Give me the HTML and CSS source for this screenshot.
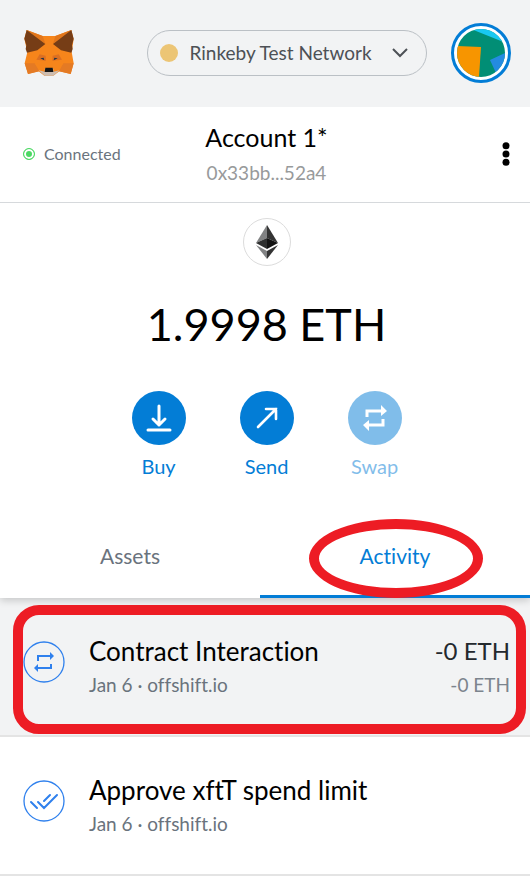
FILE: index.html
```html
<!DOCTYPE html>
<html lang="en">
<head>
<meta charset="utf-8">
<meta name="viewport" content="width=device-width, initial-scale=1">
<title>Wallet</title>
<link rel="stylesheet" href="styles.css">
</head>
<body>
<header class="topbar">
  <a class="logo" href="#" aria-label="Home">
    <svg width="50" height="46" viewBox="72 60 150 138" aria-hidden="true">
      <path fill="#f6851b" d="M80 60 128 78H166L214 60 221 88 215 126 221 160 212 192 178 184 160 197H133L116 184 84 192 74 160 82 127 73 86Z"/>
      <path fill="#e2761b" d="M80 60 136 101 128 78ZM214 60 159 101 166 78Z"/>
      <path fill="#763d16" d="M80 60 136 102 112 121 81 128 77 117 79 106 73 86ZM214 60 159 102 183 121 214 128 218 117 216 106 221 86Z"/>
      <path fill="#e47a24" d="M74 160H104L118 184 84 192ZM221 160H190L177 184 212 192Z"/>
      <path fill="#f6851b" d="M104 160 120 182 117 163ZM190 160 175 182 178 163Z"/>
      <path fill="#dc7022" d="M109 149 119 133 137 137 138 152ZM186 149 176 133 158 137 157 152Z"/>
      <path fill="#233447" d="M121 145 131 143 133 151ZM173 145 163 143 161 151Z"/>
      <path fill="#cdbdb1" d="M116 181 134 185 135 174H159L161 185 178 181 160 197H134Z"/>
      <path fill="#161616" d="M136 173H158L160 186H134Z"/>
    </svg>
  </a>
  <button class="network" type="button">
    <span class="network-dot"></span>
    <span class="network-name">Rinkeby Test Network</span>
    <svg width="16" height="10" viewBox="0 0 16 10" aria-hidden="true"><path d="M1 1 8 8 15 1" fill="none" stroke="#4d5156" stroke-width="2"/></svg>
  </button>
  <button class="avatar" type="button" aria-label="My accounts">
    <svg width="48" height="48" viewBox="0 0 48 48" aria-hidden="true">
      <clipPath id="disc"><circle cx="24" cy="24" r="24"/></clipPath>
      <g clip-path="url(#disc)">
        <path fill="#018e75" d="M0 0H48V48H0Z"/>
        <path fill="#18c8f2" d="M14 0H48V14L44 12Z"/>
        <path fill="#f79500" d="M0 17 24 18 22 48H0Z"/>
        <path fill="#248be1" d="M48 24 33 31 39 44 48 46Z"/>
      </g>
    </svg>
  </button>
</header>

<main>
  <section class="account">
    <button class="status" type="button"><span class="status-ring"></span>Connected</button>
    <button class="account-id" type="button">
      <span class="account-name">Account 1*</span>
      <span class="account-address">0x33bb...52a4</span>
    </button>
    <button class="more" type="button" aria-label="Account options">
      <svg width="8" height="24" viewBox="0 0 8 24" aria-hidden="true"><circle cx="4" cy="3.7" r="3.5"/><circle cx="4" cy="12" r="3.5"/><circle cx="4" cy="20.3" r="3.5"/></svg>
    </button>
  </section>

  <section class="overview">
    <span class="token">
      <svg width="22" height="34" viewBox="0 0 22 34" aria-hidden="true">
        <path fill="#828384" d="M11 0 0 18 11 13Z"/><path fill="#343434" d="M11 0 22 18 11 13Z"/>
        <path fill="#2f3030" d="M0 18 11 13V24Z"/><path fill="#131313" d="M22 18 11 13V24Z"/>
        <path fill="#828384" d="M0 20 11 26V34Z"/><path fill="#343434" d="M22 20 11 26V34Z"/>
      </svg>
    </span>
    <h1 class="balance">1.9998 ETH</h1>
    <div class="actions">
      <button class="action" type="button">
        <span class="action-icon"><svg width="26" height="28" viewBox="0 0 26 28" aria-hidden="true"><path d="M13 2V21M7 15 13 21 19 15M2 26H24" fill="none" stroke="#fff" stroke-width="3" stroke-linecap="round" stroke-linejoin="round"/></svg></span>
        Buy
      </button>
      <button class="action" type="button">
        <span class="action-icon"><svg width="22" height="22" viewBox="0 0 22 22" aria-hidden="true"><path d="M2 20 20 2M10 2H20V12" fill="none" stroke="#fff" stroke-width="2.6" stroke-linecap="round"/></svg></span>
        Send
      </button>
      <button class="action" type="button" disabled>
        <span class="action-icon"><svg width="26" height="26" viewBox="0 0 26 26" aria-hidden="true"><path d="M5 12V6H19M21 14V20H7" fill="none" stroke="#fff" stroke-width="3"/><path d="M19 0 25 6 19 11ZM7 15 1 20 7 26Z" fill="#fff"/></svg></span>
        Swap
      </button>
    </div>
  </section>

  <nav class="tabs">
    <button class="tab" type="button">Assets</button>
    <button class="tab tab-active" type="button">Activity<span class="mark-oval"></span></button>
  </nav>

  <ul class="activity">
    <li class="item item-selected">
      <svg class="item-icon" width="42" height="42" viewBox="0 0 42 42" aria-hidden="true"><circle cx="21" cy="21" r="20" fill="none" stroke="#2f80ed" stroke-width="1.3"/><path d="M15 20V15H28M28 23V27H14" fill="none" stroke="#2f80ed" stroke-width="2"/><path d="M27 11 31 15 27 19ZM15 23 11 27 15 31Z" fill="#2f80ed"/></svg>
      <div class="item-text">
        <h2 class="item-title">Contract Interaction</h2>
        <p class="item-note">Jan 6 · offshift.io</p>
      </div>
      <div class="item-text item-amount">
        <p class="amount">-0 ETH</p>
        <p class="item-note">-0 ETH</p>
      </div>
      <span class="mark-box"></span>
    </li>
    <li class="item">
      <svg class="item-icon" width="42" height="42" viewBox="0 0 42 42" aria-hidden="true"><circle cx="21" cy="21" r="20" fill="none" stroke="#2f80ed" stroke-width="1.3"/><path d="M8 22 14 28M15 22 21 28 34 15M21 21 27 15" fill="none" stroke="#2f80ed" stroke-width="2" stroke-linecap="round"/></svg>
      <div class="item-text">
        <h2 class="item-title">Approve xftT spend limit</h2>
        <p class="item-note">Jan 6 · offshift.io</p>
      </div>
    </li>
  </ul>
</main>
</body>
</html>
```
FILE: styles.css
```css
* { box-sizing: border-box; }

body {
  margin: 0;
  background: #fff;
  color: #000;
  font-family: Lato, "Liberation Sans", sans-serif;
  font-variant-ligatures: none;
}

button {
  padding: 0;
  border: 0;
  background: none;
  color: inherit;
  font: inherit;
  font-variant-ligatures: none;
}

svg { display: block; }
h1, h2, p, ul { margin: 0; padding: 0; font-weight: 400; }

.topbar {
  display: flex;
  align-items: center;
  justify-content: space-between;
  height: 107px;
  padding: 0 19px 2px 24px;
  background: #f2f3f4;
}

.network {
  display: flex;
  align-items: center;
  gap: 12px;
  width: 280px;
  height: 46px;
  margin-left: 48px;
  padding: 0 18px 0 12px;
  border: 1px solid #bbc0c5;
  border-radius: 23px;
  color: #4d5156;
  font-size: 19px;
}

.network-dot {
  width: 18px;
  height: 18px;
  border-radius: 50%;
  background: #ecc575;
}

.network-name { flex: 1; text-align: left; white-space: nowrap; }

.avatar {
  padding: 3px;
  border: 3px solid #037dd6;
  border-radius: 50%;
  background: #fff;
}

.account {
  display: grid;
  grid-template-columns: 1fr auto 1fr;
  align-items: center;
  height: 96px;
  padding: 0 20px 2px 23px;
  border-bottom: 1px solid #d6d9dc;
}

.status {
  display: flex;
  align-items: center;
  gap: 9px;
  color: #6a737d;
  font-size: 16px;
}

.status-ring {
  width: 12px;
  height: 12px;
  border: 1px solid #4cd964;
  border-radius: 50%;
  background: #4cd964;
  box-shadow: inset 0 0 0 2px #fff;
}

.account-id { display: grid; gap: 10px; }
.account-name { font-size: 25px; line-height: 28px; }
.account-address { color: #989a9b; font-size: 19px; line-height: 24px; }
.more { justify-self: end; }

.overview {
  display: flex;
  flex-direction: column;
  align-items: center;
  padding: 15px 0 38px 3px;
}

.token {
  display: grid;
  place-items: center;
  width: 48px;
  height: 48px;
  border: 1px solid #dcdcdc;
  border-radius: 50%;
}

.balance {
  margin: 28px 0 37px;
  font-size: 45px;
  line-height: 60px;
}

.actions { display: flex; gap: 54px; }

.action {
  display: flex;
  flex-direction: column;
  align-items: center;
  gap: 9px;
  width: 54px;
  color: #037dd6;
  font-size: 20px;
  line-height: 24px;
}

.action:disabled { opacity: .5; }

.action-icon {
  display: grid;
  place-items: center;
  width: 54px;
  height: 54px;
  border-radius: 50%;
  background: #037dd6;
}

.tabs {
  position: relative;
  z-index: 1;
  display: grid;
  grid-template-columns: 26fr 27fr;
  height: 82px;
  box-shadow: 0 2px 8px rgba(0, 0, 0, .2);
  clip-path: inset(0 0 -12px 0);
}

.tab {
  border-bottom: 3px solid #fff;
  color: #6a737d;
  font-size: 21px;
}

.tab-active {
  position: relative;
  border-color: #037dd6;
  color: #037dd6;
}

.mark-oval {
  position: absolute;
  top: 3px;
  left: 49px;
  width: 174px;
  height: 79px;
  border: 10px solid #ed1c24;
  border-radius: 50%;
}

.activity { list-style: none; }

.item {
  position: relative;
  display: flex;
  align-items: center;
  gap: 24px;
  height: 139px;
  padding: 0 20px 10px 23px;
  border-bottom: 2px solid #e4e4e4;
}

.item-selected { background: #f2f3f4; }
.item-text { flex: 1; padding-top: 10px; }
.item-title, .amount { font-size: 26px; line-height: 32px; }
.amount { color: #24292e; font-size: 24px; }
.item-note { margin-top: 4px; color: #6a737d; font-size: 19px; line-height: 28px; }
.item-amount { flex: none; text-align: right; }
.item-amount .item-note { color: #7c848d; }

.mark-box {
  position: absolute;
  z-index: 2;
  inset: 7px 4px 1px 13px;
  border: 10px solid #ed1c24;
  border-radius: 26px;
}
```
